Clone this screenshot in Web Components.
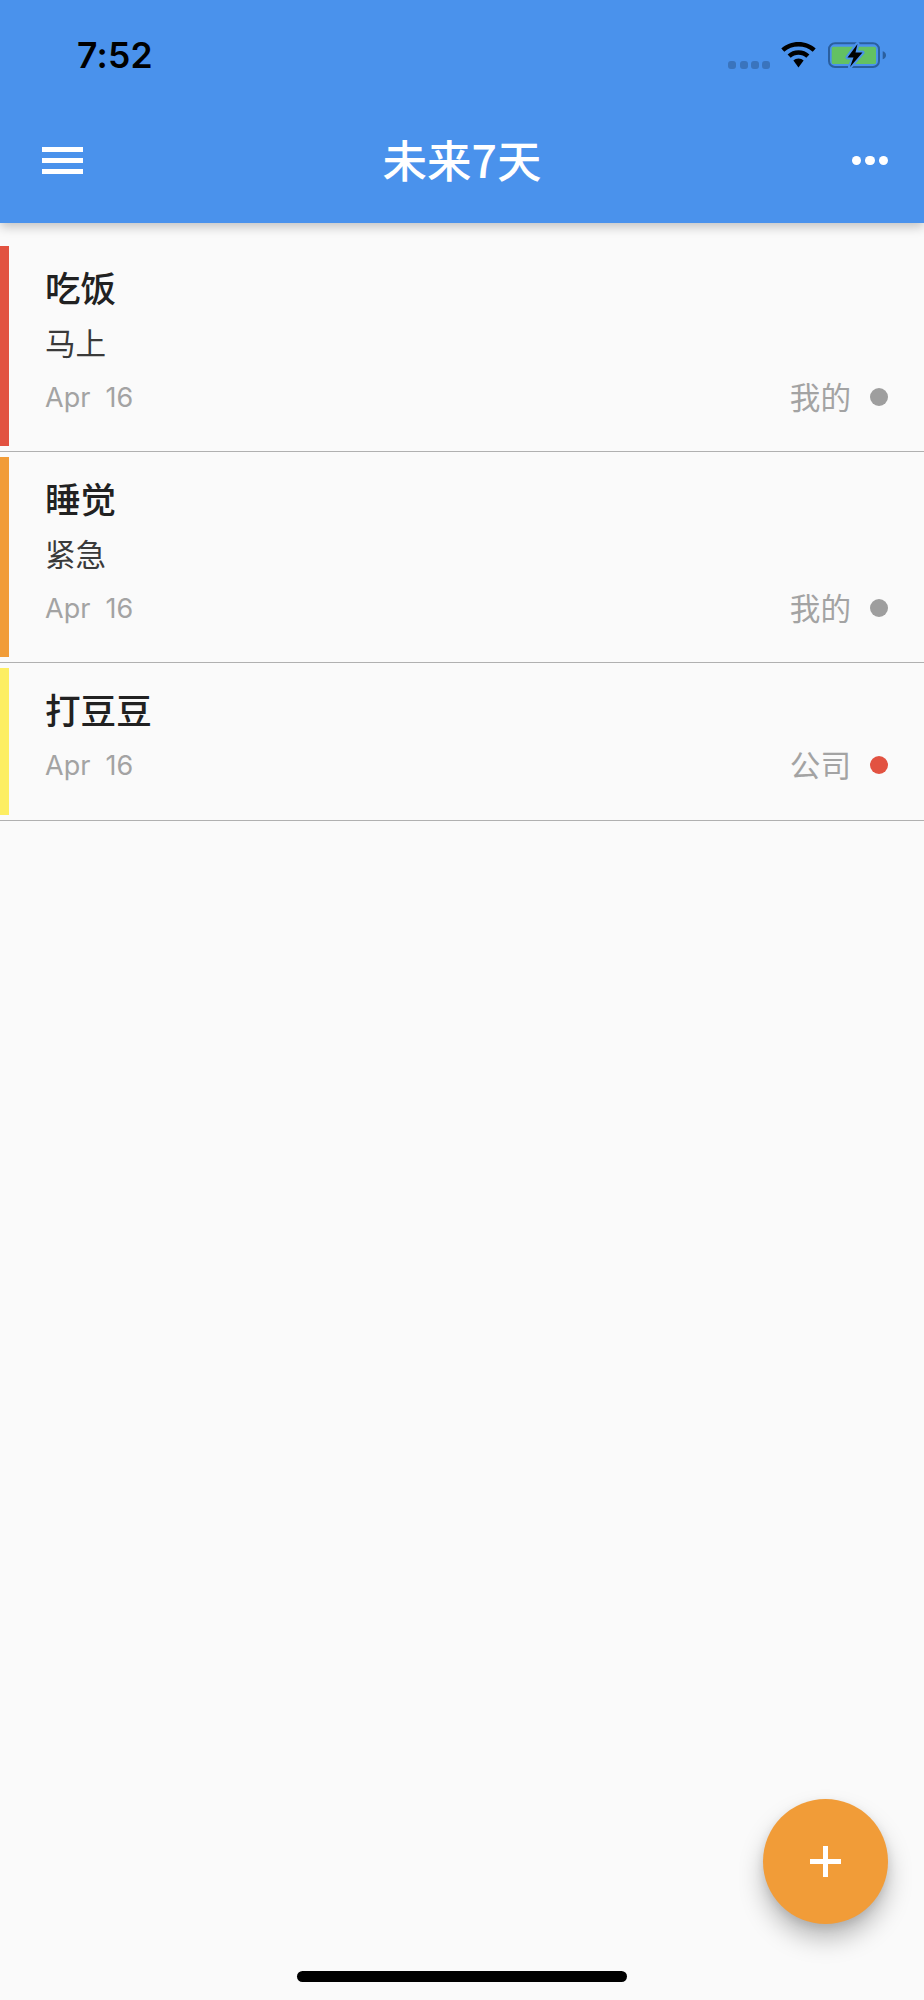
<!DOCTYPE html>
<html lang="zh-CN">
<head>
<meta charset="utf-8">
<title>未来7天</title>
<style>
html,body{margin:0;padding:0;background:#fafafa}
body{font-family:"Inter","Noto Sans CJK SC",sans-serif}
</style>
</head>
<body>
<todo-app>
  <app-header slot="header" title-text="未来7天"></app-header>
  <todo-item color="#e25241" title-text="吃饭" sub="马上" date="Apr&#160;&#160;16" tag="我的" dot="#9e9e9e"></todo-item>
  <todo-item color="#f19c38" title-text="睡觉" sub="紧急" date="Apr&#160;&#160;16" tag="我的" dot="#9e9e9e"></todo-item>
  <todo-item color="#fdee63" title-text="打豆豆" date="Apr&#160;&#160;16" tag="公司" dot="#e25241"></todo-item>
  <add-fab slot="overlay"></add-fab>
  <home-indicator slot="overlay"></home-indicator>
</todo-app>
<script>
const CJK='"Noto Sans CJK SC",sans-serif';
class TodoApp extends HTMLElement{
  constructor(){super();this.attachShadow({mode:'open'}).innerHTML=`
  <style>
    :host{display:block;position:relative;width:924px;height:2000px;overflow:hidden;background:#fafafa}
    .list{display:block;padding-top:18px}
  </style>
  <slot name="header"></slot>
  <div class="list"><slot></slot></div>
  <slot name="overlay"></slot>`;}
}
class AppHeader extends HTMLElement{
  constructor(){super();this.attachShadow({mode:'open'}).innerHTML=`
  <style>
    :host{display:block;position:relative;z-index:2;background:#4a92ec;box-shadow:0 4px 10px rgba(0,0,0,.22);height:223px}
    .status{height:98px;display:flex;align-items:flex-start;justify-content:space-between}
    .time{margin:35px 0 0 77px;font:600 35.5px/42px "Inter",sans-serif;color:#000;letter-spacing:.2px}
    .icons{display:flex;align-items:flex-start;margin:41px 38px 0 0}
    .signal{display:flex;gap:3.2px;margin:19.500px 11px 0 0}
    .signal i{width:8px;height:8px;border-radius:3px;background:#3a74bd}
    .wifi{display:block;margin:1px 12px 0 0}
    .bar{height:125px;display:grid;grid-template-columns:1fr auto 1fr;align-items:center;padding:0 36px 0 42px}
    .menu{display:flex;flex-direction:column;gap:6px;width:41px}
    .menu i{height:5.3px;background:#fff}
    .title{font:500 44.5px/56px ${CJK};color:#fff;position:relative;left:-3px;top:-2px}
    .more{display:flex;gap:4px;justify-self:end}
    .more i{width:9.5px;height:9.5px;border-radius:50%;background:#fff}
  </style>
  <div class="status">
    <div class="time">7:52</div>
    <div class="icons">
      <div class="signal"><i></i><i></i><i></i><i></i></div>
      <svg class="wifi" width="35" height="26" viewBox="0 0 35 27" preserveAspectRatio="none">
        <path d="M17.500 0C10.800 0 4.800 2.500.3 6.800L3.300 10.200C7 6.600 12 4.700 17.500 4.700S28 6.600 31.700 10.200L34.700 6.800C30.200 2.500 24.200 0 17.500 0Z" fill="#000"/>
        <path d="M17.500 8.600C13.300 8.600 9.500 10.200 6.600 13L9.700 16.400C11.700 14.400 14.500 13.300 17.500 13.300S23.300 14.400 25.300 16.400L28.400 13C25.500 10.200 21.700 8.600 17.500 8.600Z" fill="#000"/>
        <path d="M17.500 17.200C15.500 17.200 13.700 18 12.400 19.200L17.500 26.500L22.600 19.200C21.300 18 19.500 17.200 17.500 17.200Z" fill="#000"/>
      </svg>
      <svg width="58" height="28" viewBox="0 0 58 28">
        <rect x="1" y="2.300" width="50" height="23.700" rx="6" fill="none" stroke="#2a5f9f" stroke-width="2"/>
        <rect x="3.700" y="5.700" width="44.300" height="17.300" rx="1.500" fill="#63c162"/>
        <path d="M54.700 10.300C56.700 10.800 58 12.300 58 14.300S56.700 17.800 54.700 18.300Z" fill="#2a5f9f"/>
        <path d="M29.500 3L19.500 16.500H25.500L22 26L34.500 11.500H27.500Z" fill="#000" stroke="#4a92ec" stroke-width="4" stroke-linejoin="round" paint-order="stroke"/>
      </svg>
    </div>
  </div>
  <div class="bar">
    <div class="menu"><i></i><i></i><i></i></div>
    <div class="title"></div>
    <div class="more"><i></i><i></i><i></i></div>
  </div>`;
  this.shadowRoot.querySelector('.title').textContent=this.getAttribute('title-text');}
}
class TodoItem extends HTMLElement{
  constructor(){super();this.attachShadow({mode:'open'}).innerHTML=`
  <style>
    :host{display:block;border-bottom:1px solid #b0b0b0;padding:5px 0}
    .row{display:flex;align-items:stretch}
    .accent{width:9px;flex:none}
    .body{flex:1;padding:18px 36px 28px 36px;min-width:0}
    .t{font:500 35.6px/46px ${CJK};color:#212121;margin-bottom:12px}
    .s{font:400 30.6px/41px ${CJK};color:#3a3a3a;margin-bottom:15px}
    .meta{display:flex;justify-content:space-between;align-items:center;height:40px}
    .d{font:400 27px/40px "Inter",sans-serif;color:#a3a3a3}
    .tag{display:flex;align-items:center;gap:19px;font:400 30.6px/40px ${CJK};color:#a3a3a3}
    .tag .n{position:relative;top:-2px}
    .tag i{width:18px;height:18px;border-radius:50%;position:relative;top:-1px}
    :host(.nosub) .body{padding-bottom:29px}
    :host(.nosub) .t{margin-bottom:14px}
  </style>
  <div class="row">
    <div class="accent"></div>
    <div class="body">
      <div class="t"></div>
      <div class="s"></div>
      <div class="meta"><span class="d"></span><span class="tag"><span class="n"></span><i></i></span></div>
    </div>
  </div>`;
  const r=this.shadowRoot,g=n=>this.getAttribute(n);
  r.querySelector('.accent').style.background=g('color');
  r.querySelector('.t').textContent=g('title-text');
  if(g('sub'))r.querySelector('.s').textContent=g('sub');
  else{r.querySelector('.s').remove();this.classList.add('nosub');}
  r.querySelector('.d').textContent=g('date');
  r.querySelector('.n').textContent=g('tag');
  r.querySelector('.tag i').style.background=g('dot');}
}
class AddFab extends HTMLElement{
  constructor(){super();this.attachShadow({mode:'open'}).innerHTML=`
  <style>
    :host{display:flex;align-items:center;justify-content:center;position:absolute;left:763px;top:1799px;width:125px;height:125px;border-radius:50%;background:#f19c38;box-shadow:0 15px 25px rgba(0,0,0,.25),0 4px 10px rgba(0,0,0,.1)}
  </style>
  <svg width="31" height="31" viewBox="0 0 31 31"><path d="M13 0h5v13h13v5H18v13h-5V18H0v-5h13z" fill="#fff"/></svg>`;}
}
class HomeIndicator extends HTMLElement{
  constructor(){super();this.attachShadow({mode:'open'}).innerHTML=`
  <style>:host{display:block;position:absolute;left:297px;top:1971px;width:330px;height:11px;border-radius:5.500px;background:#000}</style>`;}
}
customElements.define('todo-app',TodoApp);
customElements.define('app-header',AppHeader);
customElements.define('todo-item',TodoItem);
customElements.define('add-fab',AddFab);
customElements.define('home-indicator',HomeIndicator);
</script>
</body>
</html>
